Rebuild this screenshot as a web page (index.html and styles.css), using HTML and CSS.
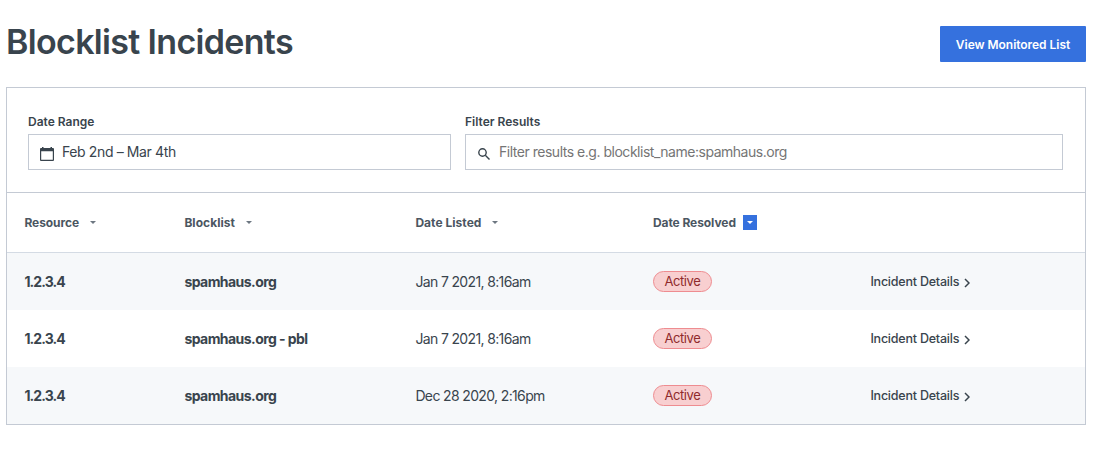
FILE: index.html
```html
<!DOCTYPE html>
<html lang="en">
<head>
<meta charset="utf-8">
<title>Blocklist Incidents</title>
<link rel="stylesheet" href="styles.css">
</head>
<body>
<main class="page">
  <header class="page-header">
    <h1 class="title">Blocklist Incidents</h1>
    <button class="button" type="button">View Monitored List</button>
  </header>
  <section class="panel">
    <div class="filters">
      <div class="field">
        <div class="label">Date Range</div>
        <div class="input">
          <svg class="icon-calendar" viewBox="0 0 14 14"><path fill-rule="evenodd" d="M2 0h1.500v1h7V0H12v1h1a1 1 0 0 1 1 1v11a1 1 0 0 1-1 1H1a1 1 0 0 1-1-1V2a1 1 0 0 1 1-1h1zM1.200 4.300v8.500h11.600V4.300z"/></svg>
          <span class="value-date">Feb 2nd – Mar 4th</span>
        </div>
      </div>
      <div class="field">
        <div class="label">Filter Results</div>
        <div class="input">
          <svg class="icon-search" viewBox="0 0 12 12"><circle cx="4.500" cy="4.500" r="3.700"/><path d="M7.300 7.300l4.200 4.200"/></svg>
          <span class="placeholder">Filter results e.g. blocklist_name:spamhaus.org</span>
        </div>
      </div>
    </div>
    <div class="row head">
      <div class="cell"><span>Resource</span><i class="sort"><svg viewBox="0 0 6 3"><path d="M0 0h6L3 3z"/></svg></i></div>
      <div class="cell"><span class="h-wide">Blocklist</span><i class="sort"><svg viewBox="0 0 6 3"><path d="M0 0h6L3 3z"/></svg></i></div>
      <div class="cell"><span class="h-wide">Date Listed</span><i class="sort"><svg viewBox="0 0 6 3"><path d="M0 0h6L3 3z"/></svg></i></div>
      <div class="cell"><span>Date Resolved</span><i class="sort sort-on"><svg viewBox="0 0 6 3"><path d="M0 0h6L3 3z"/></svg></i></div>
      <div class="cell"></div>
    </div>
    <div class="row shaded">
      <div class="cell ip">1.2.3.4</div>
      <div class="cell name">spamhaus.org</div>
      <div class="cell date">Jan 7 2021, 8:16am</div>
      <div class="cell"><span class="tag">Active</span></div>
      <div class="cell details"><span>Incident Details</span><svg class="chevron" viewBox="0 0 6 10"><path d="M1 1l4 4-4 4"/></svg></div>
    </div>
    <div class="row">
      <div class="cell ip">1.2.3.4</div>
      <div class="cell name">spamhaus.org - pbl</div>
      <div class="cell date">Jan 7 2021, 8:16am</div>
      <div class="cell"><span class="tag">Active</span></div>
      <div class="cell details"><span>Incident Details</span><svg class="chevron" viewBox="0 0 6 10"><path d="M1 1l4 4-4 4"/></svg></div>
    </div>
    <div class="row shaded">
      <div class="cell ip">1.2.3.4</div>
      <div class="cell name">spamhaus.org</div>
      <div class="cell date">Dec 28 2020, 2:16pm</div>
      <div class="cell"><span class="tag">Active</span></div>
      <div class="cell details"><span>Incident Details</span><svg class="chevron" viewBox="0 0 6 10"><path d="M1 1l4 4-4 4"/></svg></div>
    </div>
  </section>
</main>
</body>
</html>
```
FILE: styles.css
```css
* { box-sizing: border-box; }
body {
  margin: 0;
  background: #fff;
  color: #39444d;
  font-family: Inter, "Liberation Sans", sans-serif;
  font-size: 14px;
}
svg { display: block; flex: none; }
.page { padding: 22px 24px 0 6px; }
.page-header {
  display: flex;
  justify-content: space-between;
  height: 65px;
}
.title {
  margin: 0;
  font-size: 34px;
  font-weight: 600;
  line-height: 40px;
  letter-spacing: -0.670px;
  white-space: nowrap;
}
.button {
  width: 146px;
  height: 36px;
  margin-top: 4px;
  padding: 0;
  border: 0;
  border-radius: 1px;
  background: #3571de;
  color: #fff;
  font: 600 12px/37px Inter, "Liberation Sans", sans-serif;
  letter-spacing: -0.040px;
  white-space: nowrap;
}
.panel { border: 1px solid #c4cad4; }
.filters {
  display: grid;
  grid-template-columns: 423px 598px;
  gap: 14px;
  height: 105px;
  padding: 26px 0 0 21px;
  border-bottom: 1px solid #c4cad4;
}
.label {
  height: 20px;
  line-height: 16px;
  font-size: 12px;
  font-weight: 600;
}
.input {
  display: flex;
  height: 36px;
  border: 1px solid #c4cad4;
  line-height: 34px;
  white-space: nowrap;
}
.icon-calendar { width: 14px; height: 14px; margin: 12px 8px 0 11px; fill: #39444d; }
.icon-search {
  width: 12px;
  height: 12px;
  margin: 13px 9px 0 12px;
  fill: none;
  stroke: #39444d;
  stroke-width: 1.4;
}
.value-date { letter-spacing: -0.380px; }
.placeholder { color: #757575; letter-spacing: -0.480px; }
.row {
  display: grid;
  grid-template-columns: 160px 231px 237.500px 217.500px 1fr;
  align-items: center;
  height: 57px;
  padding-left: 17.400px;
}
.shaded { background: #f6f8fa; }
.head {
  height: 60px;
  border-bottom: 1px solid #d4dbe4;
  color: #4b5661;
  font-size: 12px;
  font-weight: 700;
  letter-spacing: -0.070px;
}
.h-wide { letter-spacing: 0.040px; }
.cell { display: flex; align-items: center; white-space: nowrap; }
.sort {
  display: flex;
  align-items: center;
  justify-content: center;
  width: 14px;
  height: 15px;
  margin-left: 7px;
}
.sort svg { width: 6px; height: 3px; fill: #6d7781; }
.sort-on { background: #3571de; }
.sort-on svg { fill: #fff; }
.ip, .name { font-weight: 700; }
.ip { letter-spacing: -0.900px; }
.name { letter-spacing: -0.560px; }
.date { letter-spacing: -0.640px; }
.tag {
  width: 59px;
  height: 21px;
  border: 1px solid #ee8c90;
  border-radius: 11px;
  background: #f8cfd0;
  color: #8f2b2c;
  font-size: 13px;
  letter-spacing: -0.400px;
  line-height: 19px;
  text-align: center;
}
.details { font-size: 12.500px; font-weight: 500; letter-spacing: -0.220px; }
.chevron {
  width: 6px;
  height: 10px;
  margin: 2px 0 0 5px;
  fill: none;
  stroke: #39444d;
  stroke-width: 1.500;
}
```
